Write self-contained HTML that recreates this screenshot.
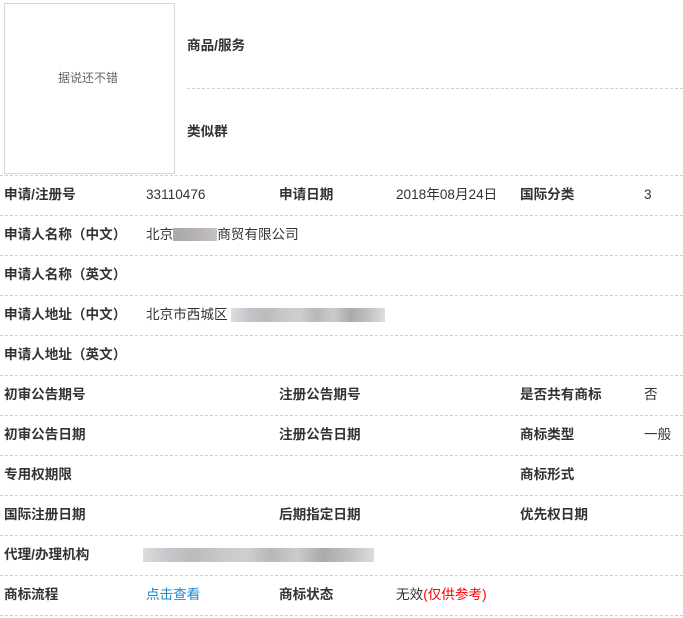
<!DOCTYPE html>
<html><head><meta charset="utf-8"><style>
body{margin:0;width:683px;height:618px;background:#fff;font-family:"Liberation Sans","Noto Sans CJK SC",sans-serif;font-size:13.6px;color:#333;position:relative;overflow:hidden}
.a{position:absolute;white-space:nowrap;line-height:16px}
.b{font-weight:bold}
.l{position:absolute;left:0;width:683px;border-top:1px dashed #d0d0d0;height:0}
.img{position:absolute;left:4px;top:3px;width:171px;height:171px;border:1px solid #d8d8d8;box-sizing:border-box}
.blur{position:absolute;height:14px;background:linear-gradient(90deg,#ddd,#c4c6ca,#bbb,#c8c8c8,#cfcfcf,#b8b8b8,#c9cbcd,#aaa,#c0c0c0,#ddd)}
</style></head><body>
<div class="img"></div>
<div class="a" style="left:58px;top:70px;font-size:12px;color:#666">据说还不错</div>
<div class="a b" style="left:187px;top:38px">商品/服务</div>
<div class="l" style="top:88px;left:187px;width:496px"></div>
<div class="a b" style="left:187px;top:124px">类似群</div>

<div class="l" style="top:175px"></div>
<div class="a b" style="left:4px;top:187px">申请/注册号</div>
<div class="a" style="left:146px;top:187px">33110476</div>
<div class="a b" style="left:279px;top:187px">申请日期</div>
<div class="a" style="left:396px;top:187px">2018年08月24日</div>
<div class="a b" style="left:520px;top:187px">国际分类</div>
<div class="a" style="left:644px;top:187px">3</div>

<div class="l" style="top:215px"></div>
<div class="a b" style="left:4px;top:227px">申请人名称（中文）</div>
<div class="a" style="left:146px;top:227px">北京<span style="display:inline-block;width:44px;height:13px;background:linear-gradient(90deg,#a8a8ae,#b6b0ae,#c4c4c6);vertical-align:-2px"></span>商贸有限公司</div>

<div class="l" style="top:255px"></div>
<div class="a b" style="left:4px;top:267px">申请人名称（英文）</div>

<div class="l" style="top:295px"></div>
<div class="a b" style="left:4px;top:307px">申请人地址（中文）</div>
<div class="a" style="left:146px;top:307px">北京市西城区</div>
<div class="blur" style="left:231px;top:308px;width:154px"></div>

<div class="l" style="top:335px"></div>
<div class="a b" style="left:4px;top:347px">申请人地址（英文）</div>

<div class="l" style="top:375px"></div>
<div class="a b" style="left:4px;top:387px">初审公告期号</div>
<div class="a b" style="left:279px;top:387px">注册公告期号</div>
<div class="a b" style="left:520px;top:387px">是否共有商标</div>
<div class="a" style="left:644px;top:387px">否</div>

<div class="l" style="top:415px"></div>
<div class="a b" style="left:4px;top:427px">初审公告日期</div>
<div class="a b" style="left:279px;top:427px">注册公告日期</div>
<div class="a b" style="left:520px;top:427px">商标类型</div>
<div class="a" style="left:644px;top:427px">一般</div>

<div class="l" style="top:455px"></div>
<div class="a b" style="left:4px;top:467px">专用权期限</div>
<div class="a b" style="left:520px;top:467px">商标形式</div>

<div class="l" style="top:495px"></div>
<div class="a b" style="left:4px;top:507px">国际注册日期</div>
<div class="a b" style="left:279px;top:507px">后期指定日期</div>
<div class="a b" style="left:520px;top:507px">优先权日期</div>

<div class="l" style="top:535px"></div>
<div class="a b" style="left:4px;top:547px">代理/办理机构</div>
<div class="blur" style="left:143px;top:548px;width:231px"></div>

<div class="l" style="top:575px"></div>
<div class="a b" style="left:4px;top:587px">商标流程</div>
<div class="a" style="left:146px;top:587px;color:#1a8ad4">点击查看</div>
<div class="a b" style="left:279px;top:587px">商标状态</div>
<div class="a" style="left:396px;top:587px">无效<span style="color:#f00">(仅供参考)</span></div>

<div class="l" style="top:615px"></div>
</body></html>
